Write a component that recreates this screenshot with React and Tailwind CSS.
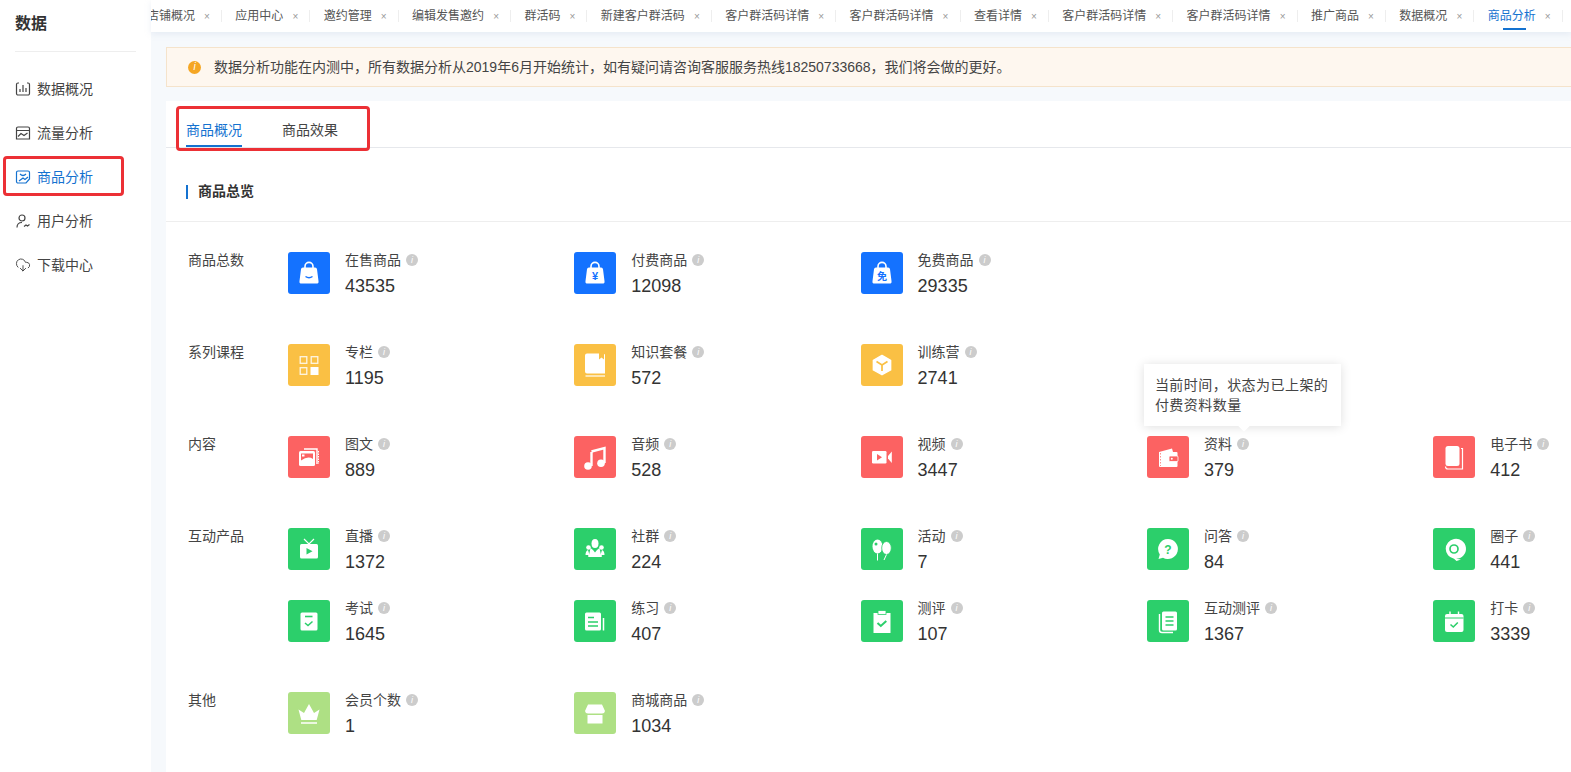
import { CloudDownload } from 'lucide-react';

const tabs = ['店铺概况', '应用中心', '邀约管理', '编辑发售邀约', '群活码', '新建客户群活码', '客户群活码详情', '客户群活码详情', '查看详情', '客户群活码详情', '客户群活码详情', '推广商品', '数据概况', '商品分析'];

const BLUE = '#1472ff';
const YELLOW = '#fac044';
const RED = '#fc6262';
const GREEN = '#2ccf6b';
const LIME = '#aee084';

const bag = 'M15 15.500h12a2 2 0 0 1 2 1.800l1.500 11.600a2.200 2.200 0 0 1-2.200 2.600H13.700a2.200 2.200 0 0 1-2.200-2.600L13 17.300a2 2 0 0 1 2-1.800z';
const handle = <path d="M17 16v-1.600a4 4 0 0 1 8 0V16" stroke="#fff" strokeWidth="1.600" fill="none" />;

const icons = {
  sale: <><path d={bag} fill="#fff" />{handle}<path d="M17.500 24.500q3.500 2.600 7 0" stroke={BLUE} strokeWidth="1.400" fill="none" /></>,
  paid: <><path d={bag} fill="#fff" />{handle}<text x="21" y="28" textAnchor="middle" fontSize="11" fontWeight="700" fill={BLUE} fontFamily="Liberation Sans">¥</text></>,
  free: <><path d={bag} fill="#fff" />{handle}<text x="21" y="28" textAnchor="middle" fontSize="10" fontWeight="700" fill={BLUE} fontFamily="Noto Sans CJK SC">免</text></>,
  column: <><g stroke="#fff" strokeWidth="1.300" fill="none" opacity=".85"><rect x="12.200" y="12.700" width="6.600" height="6.600" /><rect x="23.200" y="12.700" width="6.600" height="6.600" /><rect x="12.200" y="23.700" width="6.600" height="6.600" /></g><rect x="22.500" y="23" width="8" height="8" fill="#fff" /></>,
  bundle: <><path d="M13 9.500h12v6l2.500-2 2.500 2v-5.500l1 .5v19H13a2 2 0 0 1-2-2V11.500a2 2 0 0 1 2-2z" fill="#fff" /><path d="M11.500 32h19.500" stroke="#fff" strokeWidth="1.200" /></>,
  camp: <><path d="M21 11.500l8.600 4.800v9.600L21 30.700l-8.600-4.800v-9.600z" fill="#fff" stroke="#fff" strokeWidth="1.500" strokeLinejoin="round" /><path d="M15.500 17.500L21 21l5.500-3.500M21 21v6" stroke={YELLOW} strokeWidth="1.700" fill="none" /></>,
  article: <><rect x="11" y="15" width="16" height="15" rx="1.500" fill="#fff" /><path d="M13 17.500h12v5.500q-5-3.500-12 1.500z" fill={RED} /><rect x="14" y="18.500" width="2.500" height="2" fill="#fff" /><path d="M16 13h13v15" stroke="#fff" strokeWidth="1.400" fill="none" /><path d="M30.500 15v13" stroke="#fff" strokeWidth="1" strokeDasharray="1.500 1" /></>,
  music: <><path d="M17.500 15.500l13-3.500v15" stroke="#fff" strokeWidth="2.400" fill="none" /><path d="M17.500 16v14" stroke="#fff" strokeWidth="2.400" fill="none" /><circle cx="14" cy="30" r="3.800" fill="#fff" /><circle cx="27" cy="27.300" r="3.800" fill="#fff" /></>,
  video: <><rect x="11" y="15" width="14.500" height="12.500" rx="1.200" fill="#fff" /><path d="M16 18l5 3.200-5 3.200z" fill={RED} /><path d="M27 20l3.800-4.500v11.500L27 22.500z" fill="#fff" /></>,
  file: <><path d="M12 16l13-3.600 1 3.600h3.500a1 1 0 0 1 1 1v13a1 1 0 0 1-1 1H13a1 1 0 0 1-1-1z" fill="#fff" /><rect x="22" y="20" width="9" height="5.500" rx="1" fill={RED} stroke="#fff" strokeWidth=".8" /><circle cx="24.800" cy="22.800" r="1" fill="#fff" /><path d="M13.500 17v13" stroke={RED} strokeWidth=".7" strokeDasharray="1.500 1.500" /></>,
  ebook: <><rect x="12.500" y="10" width="14" height="20" rx="2.500" fill="#fff" /><path d="M28 12.500h1.500V33H15a2.500 2.500 0 0 1-2.500-2.500" stroke="#fff" strokeWidth="1.200" fill="none" /></>,
  live: <><path d="M16 11l5 5 5-5" stroke="#fff" strokeWidth="1.200" fill="none" /><rect x="12" y="16" width="18" height="14.500" rx="1.500" fill="#fff" /><path d="M18.500 20l6 3.300-6 3.300z" fill={GREEN} /></>,
  group: <><ellipse cx="21" cy="15.500" rx="3.500" ry="4.500" fill="#fff" /><path d="M16.500 20l2.500 2 2 2.500 2-2.500 2.500-2 1.500 7h-12z" fill="#fff" /><circle cx="14.500" cy="19.500" r="2.300" fill="#fff" /><circle cx="27.500" cy="19.500" r="2.300" fill="#fff" /><path d="M11.500 27q0-4 2.500-5l1.500 5zM30.500 27q0-4-2.500-5l-1.500 5z" fill="#fff" /><rect x="14" y="27" width="14" height="2" rx="1" fill="#fff" /></>,
  event: <><ellipse cx="16.500" cy="18.500" rx="5" ry="7" fill="#fff" /><circle cx="15" cy="16" r="1.500" fill={GREEN} /><ellipse cx="25.500" cy="20" rx="4.800" ry="6.500" fill="#fff" stroke={GREEN} strokeWidth=".8" /><path d="M16.500 25.500v7M25.500 26.500l-2.500 5.500" stroke="#fff" strokeWidth="1" /></>,
  qa: <><path d="M21 11a10 10 0 1 1-5 18.700L11.500 31l1.300-4.500A10 10 0 0 1 21 11z" fill="#fff" /><text x="21" y="26" textAnchor="middle" fontSize="12" fontWeight="700" fill={GREEN} fontFamily="Liberation Sans">?</text></>,
  circle: <><path d="M21 11a10 10 0 1 1 2 19.800l5 .7-4.500 1.500-2.500-2.300A10 10 0 0 1 21 11z" fill="#fff" /><circle cx="21" cy="21" r="4" fill="none" stroke={GREEN} strokeWidth="1.700" /></>,
  exam: <><rect x="12.500" y="12.500" width="17" height="18" rx="1.500" fill="#fff" /><path d="M17 16.500h7.500" stroke={GREEN} strokeWidth="1.600" /><path d="M17 23l3 2.500 4.500-4" stroke={GREEN} strokeWidth="1.500" fill="none" /></>,
  practice: <><rect x="11" y="12.500" width="16" height="18" rx="1.500" fill="#fff" /><path d="M14 17.500h6M14 22h10M14 26h10" stroke={GREEN} strokeWidth="1.600" /><path d="M29.500 18v12.500" stroke="#fff" strokeWidth="1.500" /></>,
  review: <><rect x="12.500" y="13" width="17" height="20" fill="#fff" /><rect x="17" y="10.500" width="8" height="4" fill="#fff" stroke={GREEN} strokeWidth=".8" /><path d="M16.500 23l3.300 3 5.500-5" stroke={GREEN} strokeWidth="2" fill="none" /></>,
  interact: <><rect x="15" y="11.500" width="15" height="19" rx="1.500" fill="#fff" /><path d="M18.500 17h8M18.500 21h8M18.500 25h8" stroke={GREEN} strokeWidth="1.500" /><path d="M12.500 14v16a2.500 2.500 0 0 0 2.500 2.500h11" stroke="#fff" strokeWidth="1.400" fill="none" /></>,
  clock: <><rect x="12" y="14" width="18.500" height="18" rx="2" fill="#fff" /><path d="M17 11.500v4M25.500 11.500v4" stroke="#fff" strokeWidth="1.400" /><path d="M12 18h18.500" stroke={GREEN} strokeWidth="1" /><path d="M17.500 24.500l2.800 2.500 4.500-4.500" stroke={GREEN} strokeWidth="1.600" fill="none" /></>,
  member: <><path d="M10.500 17.500l5.500 3.500L21 12l5 9 5.500-3.500-2.800 10.500H13.300z" fill="#fff" /><path d="M13 31h16" stroke="#fff" strokeWidth="1.500" /></>,
  store: <><path d="M14 12.500h14l3 6.500a3 3 0 0 1-3 2.500H14a3 3 0 0 1-3-2.500z" fill="#fff" /><rect x="13.500" y="23" width="15" height="8.500" fill="#fff" /></>,
};

const groups = [
  { label: '商品总数', color: BLUE, rows: [[['sale', '在售商品', '43535'], ['paid', '付费商品', '12098'], ['free', '免费商品', '29335']]] },
  { label: '系列课程', color: YELLOW, rows: [[['column', '专栏', '1195'], ['bundle', '知识套餐', '572'], ['camp', '训练营', '2741']]] },
  { label: '内容', color: RED, rows: [[['article', '图文', '889'], ['music', '音频', '528'], ['video', '视频', '3447'], ['file', '资料', '379'], ['ebook', '电子书', '412']]] },
  {
    label: '互动产品', color: GREEN, rows: [
      [['live', '直播', '1372'], ['group', '社群', '224'], ['event', '活动', '7'], ['qa', '问答', '84'], ['circle', '圈子', '441']],
      [['exam', '考试', '1645'], ['practice', '练习', '407'], ['review', '测评', '107'], ['interact', '互动测评', '1367'], ['clock', '打卡', '3339']],
    ],
  },
  { label: '其他', color: LIME, rows: [[['member', '会员个数', '1'], ['store', '商城商品', '1034']]] },
];

function Info() {
  return <span className="ml-[5px] flex h-3 w-3 items-center justify-center rounded-full bg-[#cccccc] text-[9px] italic leading-none text-white">i</span>;
}

function Stat({ icon, name, value, color }) {
  return (
    <div className="relative flex h-[42px] gap-[15px]">
      <div className="h-[42px] w-[42px] shrink-0 rounded-[3px]" style={{ backgroundColor: color }}>
        <svg viewBox="0 0 42 42" className="h-full w-full">{icons[icon]}</svg>
      </div>
      <div className="pt-px">
        <div className="flex h-[14px] items-center text-[14px] leading-[14px] text-[#444]">{name}<Info /></div>
        <div className="mt-[7px] text-[18px] leading-6 text-[#333]">{value}</div>
      </div>
      {name === '资料' && (
        <div className="absolute bottom-[52px] left-[-3px] z-10 w-[197px] bg-white py-[11px] pl-[11px] text-[14px] leading-5 tracking-[0.45px] text-[#444] shadow-[0_1px_10px_rgba(0,0,0,0.13)]">
          当前时间，状态为已上架的<br />付费资料数量
          <span className="absolute bottom-[-4px] left-[96px] h-2 w-2 rotate-45 bg-white" />
        </div>
      )}
    </div>
  );
}

const iconProps = { width: 16, height: 16, viewBox: '0 0 16 16', fill: 'none', stroke: 'currentColor', strokeWidth: 1.200 };

const menu = [
  { name: '数据概况', icon: <svg {...iconProps}><path d="M4 2H3a1.500 1.500 0 0 0-1.500 1.500v9A1.500 1.500 0 0 0 3 14h10a1.500 1.500 0 0 0 1.500-1.500v-9A1.500 1.500 0 0 0 13 2h-1" /><path d="M5 8v3M8 4v7M11 7v4" /></svg> },
  { name: '流量分析', icon: <svg {...iconProps}><path d="M3 2h10a1.500 1.500 0 0 1 1.500 1.500V14h-13V3.500A1.500 1.500 0 0 1 3 2z" /><path d="M1.500 5.500h13M3 11.500l3-3 3 2 3.500-2.500" /></svg> },
  { name: '商品分析', active: true, icon: <svg {...iconProps}><path d="M3 2h10a1.500 1.500 0 0 1 1.500 1.500V10L11 14H3a1.500 1.500 0 0 1-1.500-1.500v-9A1.500 1.500 0 0 1 3 2z" /><path d="M5 5q3 3 6 0M4 12l4-3 2 1.500 3-2.500" /></svg> },
  { name: '用户分析', icon: <svg {...iconProps}><circle cx="7" cy="5" r="3" /><path d="M2 14.500c0-3 2-5 5-5M9 13.500l2-1.500 1.500 1 2-1.500" /></svg> },
  { name: '下载中心', icon: <CloudDownload size={16} strokeWidth={1.400} /> },
];

export default function App() {
  return (
    <div className="flex h-[772px] w-[1571px] overflow-hidden bg-[#f6f9fc] font-['Liberation_Sans','Noto_Sans_CJK_SC',sans-serif]">
      <aside className="h-full w-[151px] shrink-0 bg-white">
        <div className="mx-[15px] h-[52px] border-b border-[#eeeeee] pt-[14px] text-[16px] font-bold leading-5 text-[#333]">数据</div>
        <nav className="mt-[15px]">
          {menu.map(m => (
            <div key={m.name} className={`relative flex h-11 items-center gap-[6px] pl-[15px] text-[14px] ${m.active ? 'text-[#1472d0]' : 'text-[#444]'}`}>
              {m.icon}
              <span>{m.name}</span>
              {m.active && <div className="absolute left-[3px] top-[1px] h-10 w-[121px] rounded-[4px] border-[3px] border-[#ec3035]" />}
            </div>
          ))}
        </nav>
      </aside>

      <main className="min-w-0 flex-1">
        <div className="flex h-8 items-center overflow-hidden bg-white shadow-[0_2px_6px_rgba(180,195,220,0.25)]">
          <div className="ml-[-4px] flex shrink-0 items-center">
            {tabs.map((t, i) => (
              <div key={i} className={`relative flex h-8 shrink-0 items-center text-[12px] ${i === tabs.length - 1 ? 'text-[#1472d0]' : 'text-[#555]'}`}>
                <span>{t}</span>
                <span className="ml-2 w-2 text-center text-[10px] text-[#999]">×</span>
                <span className="ml-[10px] mr-[13.35px] h-3 w-px bg-[#eeeeee]" />
                {i === tabs.length - 1 && <span className="absolute bottom-[2px] left-[15px] h-[2px] w-[23px] bg-[#1472d0]" />}
              </div>
            ))}
          </div>
        </div>

        <div className="w-[1500px] pl-[15px] pt-[15px]">
          <div className="flex h-10 items-center border border-[#f5e3cb] bg-[#fef7ef] pl-[21px] text-[14px] text-[#444]">
            <span className="mr-[13px] flex h-[13px] w-[13px] items-center justify-center rounded-full bg-[#f5a623] text-[10px] italic leading-none text-white">i</span>
            数据分析功能在内测中，所有数据分析从2019年6月开始统计，如有疑问请咨询客服服务热线18250733668，我们将会做的更好。
          </div>

          <div className="mt-[14px] h-[700px] bg-white">
            <div className="relative flex h-[47px] gap-10 border-b border-[#e6e8ec] pl-5 pt-[19px] text-[14px] leading-5 text-[#444]">
              <div className="h-[27px] border-b-2 border-[#1472d0] text-[#1472d0]">商品概况</div>
              <div>商品效果</div>
              <div className="absolute left-[10px] top-[5px] h-[45px] w-[194px] rounded-[4px] border-[3px] border-[#ec3035]" />
            </div>
            <div className="flex h-[74px] items-center border-b border-[#eeeeee] pl-5 pt-[14px]">
              <span className="mr-[10px] h-[14px] w-[2px] bg-[#1472d0]" />
              <span className="text-[14px] font-bold text-[#333]">商品总览</span>
            </div>
            <div className="flex flex-col gap-[50px] pl-[22px] pt-[30px]">
              {groups.map(g => (
                <div key={g.label} className="flex">
                  <div className="w-[100px] shrink-0 pt-px text-[14px] leading-[14px] text-[#444]">{g.label}</div>
                  <div className="flex flex-col gap-[30px]">
                    {g.rows.map((row, i) => (
                      <div key={i} className="grid grid-cols-[repeat(5,286.3px)]">
                        {row.map(([icon, name, value]) => <Stat key={name} icon={icon} name={name} value={value} color={g.color} />)}
                      </div>
                    ))}
                  </div>
                </div>
              ))}
            </div>
          </div>
        </div>
      </main>
    </div>
  );
}
